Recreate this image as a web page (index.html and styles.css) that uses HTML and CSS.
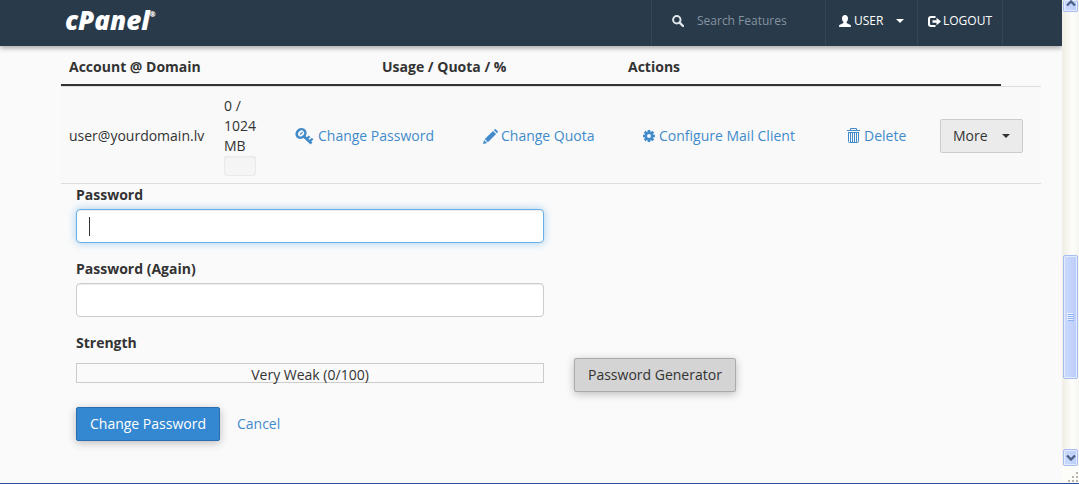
FILE: index.html
```html
<!DOCTYPE html>
<html lang="en">
<head>
<meta charset="utf-8">
<title>cPanel - Email Accounts</title>
<link rel="stylesheet" href="styles.css">
</head>
<body>
<div class="window">
  <div class="page">
    <header class="topbar">
      <a class="logo" href="#">cPanel<sup class="logo-mark">®</sup></a>
      <nav class="topnav">
        <div class="nav-item nav-search">
          <svg class="icon-search" viewBox="0 0 12 12" width="12" height="12"><circle cx="4.8" cy="4.8" r="3.7" fill="none" stroke="currentColor" stroke-width="2"/><path d="M7.6 7.6L11 11" stroke="currentColor" stroke-width="2.4" stroke-linecap="round"/></svg>
          <input class="search-input" type="text" placeholder="Search Features" aria-label="Search Features">
        </div>
        <button class="nav-item nav-user" type="button">
          <svg viewBox="0 0 12 12" width="12" height="12"><path fill="currentColor" d="M6 0C4.200 0 3 1.300 3 3.200c0 1.700.6 2.900 1.400 3.700v1C3.600 8.700.3 9.200.1 10.700V12h11.800v-1.300c-.2-1.500-3.500-2-4.300-2.800v-1C8.400 6.100 9 4.900 9 3.200 9 1.300 7.800 0 6 0z"/></svg>
          <span>USER</span>
          <span class="caret"></span>
        </button>
        <a class="nav-item nav-logout" href="#">
          <svg viewBox="0 0 13 11" width="13" height="11"><path d="M7.500 1H3Q1 1 1 3v5q0 2 2 2h4.500" fill="none" stroke="currentColor" stroke-width="2"/><path fill="currentColor" d="M4.500 4.200h4V1.800L13 5.500 8.500 9.200V6.800h-4z"/></svg>
          <span>LOGOUT</span>
        </a>
      </nav>
    </header>
    <main class="content">
      <table class="accounts">
        <thead>
          <tr class="head-row">
            <th>Account @ Domain</th>
            <th>Usage / Quota / %</th>
            <th>Actions</th>
          </tr>
        </thead>
        <tbody>
          <tr class="account-row">
            <td>user@yourdomain.lv</td>
            <td class="usage">0 / 1024 MB<div class="usage-bar"></div></td>
            <td><a class="action" href="#">
              <svg viewBox="0 0 19 18" width="19" height="18"><g fill="none" stroke="currentColor"><ellipse cx="6" cy="6.500" rx="4.600" ry="4" stroke-width="2.600" transform="rotate(-40 6 6.500)"/><path d="M8.500 9L16.500 16.500" stroke-width="2.800"/><path d="M11.800 11.700L14.600 9.300M14.600 14.300L17.600 11.700" stroke-width="2.200"/></g><path d="M5 7.500L7.500 5.300" stroke="currentColor" stroke-width="1.200"/></svg>
              <span>Change Password</span></a></td>
            <td><a class="action action-quota" href="#">
              <svg viewBox="0 0 15 15" width="15" height="15"><path fill="currentColor" d="M0 15l1.100-4.100 3 3zM1.800 10L10 1.900l3.100 3.100-8.200 8.200zM10.800 1.100l.7-.7q.7-.6 1.400 0l1.700 1.700q.6.7 0 1.400l-.7.700z"/></svg>
              <span>Change Quota</span></a></td>
            <td><a class="action" href="#">
              <svg viewBox="0 0 12 12" width="12" height="12"><circle cx="6" cy="6" r="3.200" fill="none" stroke="currentColor" stroke-width="2.500"/><path d="M6 0v2.500M6 9.500V12M0 6h2.500M9.500 6H12M1.700 1.700l1.800 1.800M8.500 8.500l1.800 1.800M1.700 10.300l1.800-1.800M8.500 3.500l1.800-1.800" stroke="currentColor" stroke-width="2.700"/></svg>
              <span>Configure Mail Client</span></a></td>
            <td><a class="action" href="#">
              <svg viewBox="0 0 13 16" width="13" height="16"><path d="M0 2.500h13M3.500 2.500v-2h6v2M1 4.500h11M1.500 5v8.500q0 1 1 1h8q1 0 1-1V5M3.500 5v9M5.500 5v9M7.500 5v9M9.500 5v9" fill="none" stroke="currentColor"/></svg>
              <span>Delete</span></a></td>
            <td><button class="btn btn-more" type="button">More <span class="caret"></span></button></td>
          </tr>
        </tbody>
      </table>
      <form class="password-form">
        <div class="field">
          <label for="pw">Password</label>
          <input class="text-input is-active" id="pw" type="password">
        </div>
        <div class="field">
          <label for="pw2">Password (Again)</label>
          <input class="text-input" id="pw2" type="password">
        </div>
        <div class="strength">
          <div class="strength-title" id="strength">Strength</div>
          <div class="strength-row">
            <div class="meter" aria-labelledby="strength">Very Weak (0/100)</div>
            <button class="btn btn-generate" type="button">Password Generator</button>
          </div>
        </div>
        <div class="form-actions">
          <button class="btn btn-primary" type="button">Change Password</button>
          <a class="cancel" href="#">Cancel</a>
        </div>
      </form>
    </main>
  </div>
  <div class="scrollbar">
    <div class="scroll-button scroll-up"><svg viewBox="0 0 10 7" width="10" height="7"><path d="M1 5.500L5 1.500l4 4" fill="none" stroke="currentColor" stroke-width="2.400"/></svg></div>
    <div class="track-before"></div>
    <div class="thumb"><svg viewBox="0 0 7 8" width="7" height="8"><path d="M0 .5h6M0 2.500h6M0 4.500h6M0 6.500h6" stroke="#eef4fe"/><path d="M1 1.500h6M1 3.500h6M1 5.500h6M1 7.500h6" stroke="#8cb0f8"/></svg></div>
    <div class="track-after"></div>
    <div class="scroll-button"><svg viewBox="0 0 10 7" width="10" height="7"><path d="M1 1.500l4 4 4-4" fill="none" stroke="currentColor" stroke-width="2.400"/></svg></div>
    <div class="grip"><svg viewBox="0 0 11 11" width="11" height="11"><path fill="#b8b4a6" d="M8 0h2v2H8zM4 4h2v2H4zM8 4h2v2H8zM0 8h2v2H0zM4 8h2v2H4zM8 8h2v2H8z"/></svg></div>
  </div>
</div>
</body>
</html>
```
FILE: styles.css
```css
* { box-sizing: border-box; }

body {
  margin: 0;
  background: #fafafa;
  color: #333;
  font: 14px/20px "Open Sans", "Noto Sans", sans-serif;
}

button, input { font: inherit; color: inherit; }
a { color: #428bca; text-decoration: none; }
svg { display: block; flex: none; }

.window {
  display: flex;
  min-height: 100vh;
  border-bottom: 1px solid #2b4fa0;
}

.page { flex: 1; min-width: 0; }

.topbar {
  display: flex;
  justify-content: space-between;
  height: 46px;
  padding: 0 59px 0 65px;
  background: #293a4a;
  box-shadow: 0 2px 5px rgba(0, 0, 0, 0.35);
}

.logo {
  color: #fff;
  font: italic 800 26px/40px "Open Sans", sans-serif;
}

.logo-mark { font-size: 7px; line-height: 7px; vertical-align: 13px; }

.topnav {
  display: flex;
  color: #fff;
  font-size: 12px;
}

.nav-item {
  display: flex;
  align-items: center;
  padding: 0 10px 4px;
  border: 0;
  border-left: 1px solid #354654;
  background: none;
  color: #fff;
}

.nav-search { width: 174px; padding-left: 20px; gap: 13px; }
.icon-search { color: #dfe5ea; }

.search-input {
  width: 100%;
  min-width: 0;
  padding: 0;
  border: 0;
  background: none;
}

.search-input::placeholder { color: #8593a0; opacity: 1; }

.nav-user { width: 92px; padding-left: 13px; gap: 3px; }
.nav-user .caret { margin-left: auto; margin-right: 3px; }
.nav-logout { gap: 2px; border-right: 1px solid #354654; }

.caret {
  display: inline-block;
  border-top: 4px solid currentColor;
  border-left: 4px solid transparent;
  border-right: 4px solid transparent;
}

.content { padding: 11px 21px 40px 61px; }

.accounts, .accounts thead, .accounts tbody { display: block; }
.accounts tr { display: grid; }
.accounts th { padding: 0 8px 7px; text-align: left; }
.accounts td { padding: 9px 8px 7px; }

.head-row {
  grid-template-columns: 313fr 246fr 381fr;
  margin-right: 40px;
  border-bottom: 2px solid #333;
}

.accounts thead { box-shadow: 0 1px #ddd; }

.account-row {
  grid-template-columns: 155fr 71fr 188fr 160fr 204fr 93fr 109fr;
  align-items: center;
  margin-top: 1px;
  border-bottom: 1px solid #ddd;
  background: #f9f9f9;
  white-space: nowrap;
}

.accounts .usage { padding-right: 30px; white-space: normal; }

.usage-bar {
  width: 32px;
  height: 20px;
  border-radius: 4px;
  background: #f5f5f5;
  box-shadow: inset 0 0 0 1px #eaeaea, inset 0 1px 2px rgba(0, 0, 0, 0.1);
}

.action { display: flex; align-items: center; gap: 4px; }
.action-quota { gap: 3px; }

.btn {
  height: 34px;
  padding: 0 12px;
  border: 1px solid #ababab;
  border-radius: 2px;
  white-space: nowrap;
}

.btn-more {
  display: flex;
  align-items: center;
  gap: 14px;
  border-color: #ccc;
  background: #ebebeb;
}

.password-form { padding: 1px 15px 0; }

.field, .strength { margin-bottom: 16px; }
.field label, .strength-title { display: block; margin-bottom: 4px; font-weight: 700; }

.text-input {
  display: block;
  width: 100%;
  max-width: 468px;
  height: 34px;
  padding: 6px 12px;
  border: 1px solid #ccc;
  border-radius: 4px;
  background: #fff;
  box-shadow: inset 0 1px 1px rgba(0, 0, 0, 0.075);
}

.is-active {
  border-color: #66afe9;
  background: linear-gradient(#333, #333) 12px center / 1px 19px no-repeat #fff;
  box-shadow: inset 0 1px 1px rgba(0, 0, 0, 0.075), 0 0 8px rgba(102, 175, 233, 0.6);
}

.strength { margin-bottom: 15px; }
.strength .strength-title { margin-bottom: 5px; }
.strength-row { display: flex; align-items: center; gap: 30px; }

.meter {
  width: 468px;
  height: 20px;
  margin-bottom: 4px;
  border: 1px solid #ccc;
  line-height: 22px;
  text-align: center;
}

.btn-generate {
  padding: 0 13px;
  background: #d4d4d4;
  box-shadow: 0 2px 8px rgba(0, 0, 0, 0.25);
}

.form-actions { display: flex; align-items: center; gap: 17px; }

.btn-primary {
  padding: 0 13px;
  border-color: #2a6fad;
  background: #3388d1;
  color: #fff;
  box-shadow: 0 2px 8px rgba(0, 0, 0, 0.25);
}

.scrollbar {
  display: flex;
  flex-direction: column;
  flex: none;
  width: 17px;
  padding: 0 1px;
  background: linear-gradient(90deg, #efede4, #fdfdfa 60%, #f6f5f0);
}

.track-before { flex: 245; }
.track-after { flex: 70; }

.thumb, .scroll-button {
  display: grid;
  place-items: center;
  border: 1px solid #a8bdf0;
  border-radius: 2px;
  background: linear-gradient(90deg, #cbdafd, #bccdfb);
  box-shadow: inset 0 0 0 1px #e3ebff;
  color: #4d6185;
}

.thumb { height: 124px; }
.scroll-button { height: 17px; }
.scroll-up { height: 12px; padding-bottom: 4px; border-top: 0; }

.grip {
  display: grid;
  place-items: end;
  height: 17px;
  margin: 0 -1px;
  background: #fcfcf9;
}
```
